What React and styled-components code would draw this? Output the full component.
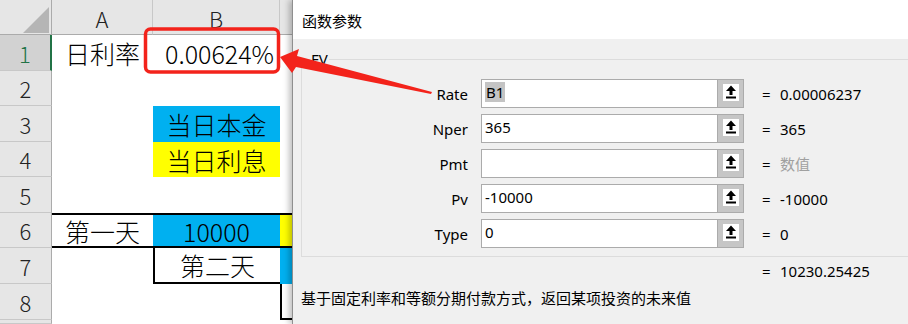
import React from "react";
import styled, { createGlobalStyle, css } from "styled-components";

const GlobalStyle = createGlobalStyle`
  html, body {
    margin: 0;
    padding: 0;
    background: #fff;
  }
  * {
    box-sizing: border-box;
  }
`;

const SHEET_FONT = `"Noto Sans CJK SC", "Noto Sans", sans-serif`;
const UI_FONT = `"Noto Sans", "Noto Sans CJK SC", sans-serif`;

// row 9 only peeks in at the bottom edge, so its number isn't drawn
const rows = [
  { n: 1, cells: [{ text: "日利率" }, { text: "0.00624%", align: "right" }, {}] },
  { n: 2, cells: [{}, {}, {}] },
  { n: 3, cells: [{}, { text: "当日本金", fill: "#00b0f0" }, {}] },
  { n: 4, cells: [{}, { text: "当日利息", fill: "#ffff00" }, {}] },
  { n: 5, cells: [{}, {}, {}] },
  {
    n: 6,
    cells: [
      { text: "第一天", top: true, bottom: true },
      { text: "10000", fill: "#00b0f0", top: true, bottom: true },
      { fill: "#ffff00", top: true, bottom: true },
    ],
  },
  { n: 7, cells: [{}, { text: "第二天", left: true, bottom: true }, { fill: "#00b0f0" }] },
  { n: 8, cells: [{}, {}, { left: true, bottom: true }] },
  { n: 9, hideNumber: true, cells: [{}, {}, {}] },
];

const args = [
  { label: "Rate", value: "B1", selected: true, result: "0.00006237" },
  { label: "Nper", value: "365", result: "365" },
  { label: "Pmt", value: "", result: "数值", muted: true },
  { label: "Pv", value: "-10000", result: "-10000" },
  { label: "Type", value: "0", result: "0" },
];

const RefIcon = () => (
  <svg width="16" height="16" viewBox="0 0 16 16">
    <polygon points="8,1.5 3,7 6.5,7 6.5,11 9.5,11 9.5,7 13,7" fill="#000" />
    <rect x="3" y="12.5" width="10" height="2" fill="#000" />
  </svg>
);

const App = () => {
  return (
    <Wrapper>
      <GlobalStyle />
      <Sheet>
        <Corner>
          <CornerMark />
        </Corner>
        <ColHead>A</ColHead>
        <ColHead>B</ColHead>
        <ColHead $last />
        {rows.map((row) => (
          <React.Fragment key={row.n}>
            <RowHead $active={row.n === 1}>{row.hideNumber ? null : row.n}</RowHead>
            {row.cells.map((c, i) => (
              <Cell
                key={i}
                $fill={c.fill}
                $align={c.align}
                $top={c.top}
                $bottom={c.bottom}
                $left={c.left}
              >
                {c.text}
              </Cell>
            ))}
          </React.Fragment>
        ))}
      </Sheet>

      <Dialog>
        <TitleBar>函数参数</TitleBar>
        <Body>
          <Group>
            <Legend>FV</Legend>
            {args.map((a) => (
              <ArgRow key={a.label}>
                <ArgLabel>{a.label}</ArgLabel>
                <InputBox>
                  <InputText>
                    {a.selected ? <Selection>{a.value}</Selection> : a.value}
                  </InputText>
                  <RefButton>
                    <RefFace>
                      <RefIcon />
                    </RefFace>
                  </RefButton>
                </InputBox>
                <Eq>=</Eq>
                <ArgValue $muted={a.muted}>{a.result}</ArgValue>
              </ArgRow>
            ))}
          </Group>
          <ResultRow>
            <Eq $flush>=</Eq>
            <ArgValue>10230.25425</ArgValue>
          </ResultRow>
          <Description>基于固定利率和等额分期付款方式，返回某项投资的未来值</Description>
        </Body>
      </Dialog>

      <Callout width="908" height="324" viewBox="0 0 908 324">
        <rect
          x="145.5"
          y="29"
          width="133"
          height="43"
          rx="5"
          fill="none"
          stroke="#f3231b"
          strokeWidth="3.5"
        />
        <polygon
          points="280,57 299,49 297,56 432,92 431,94 296,67 292,73"
          fill="#f3231b"
        />
      </Callout>
    </Wrapper>
  );
};

export default App;

const Wrapper = styled.div`
  position: relative;
  display: flex;
  width: 908px;
  height: 324px;
  overflow: hidden;
  background: #fff;
`;

const Sheet = styled.div`
  display: grid;
  grid-template-columns: 52px 101px 127px 12px;
  grid-template-rows: 35px 36px 35px 36px 35px 36px 35px 36px 36px 4px;
  width: 292px;
  flex-shrink: 0;
  font-family: ${SHEET_FONT};
  font-weight: 300;
  color: #000;
`;

const Corner = styled.div`
  background: #e6e6e6;
  border-right: 1px solid #ababab;
  border-bottom: 1px solid #ababab;
  position: relative;
`;

const CornerMark = styled.div`
  position: absolute;
  left: 23px;
  top: 7px;
  width: 26px;
  height: 26px;
  background: #b5b5b5;
  clip-path: polygon(100% 0, 100% 100%, 0 100%);
`;

const ColHead = styled.div`
  background: #e6e6e6;
  border-right: ${(p) => (p.$last ? "none" : "1px solid #c8c8c8")};
  border-bottom: 1px solid #ababab;
  display: flex;
  align-items: center;
  justify-content: center;
  font-size: 22px;
  color: #222;
  padding-top: 2px;
`;

const RowHead = styled.div`
  background: ${(p) => (p.$active ? "#d2d2d2" : "#e6e6e6")};
  color: ${(p) => (p.$active ? "#217346" : "#222")};
  border-bottom: 1px solid #c8c8c8;
  border-right: ${(p) => (p.$active ? "2px solid #217346" : "1px solid #ababab")};
  display: flex;
  align-items: center;
  justify-content: center;
  font-size: 22px;
  overflow: hidden;
  min-height: 0;
`;

const Cell = styled.div`
  display: flex;
  align-items: center;
  justify-content: ${(p) => (p.$align === "right" ? "flex-end" : "center")};
  padding: ${(p) => (p.$align === "right" ? "0 6px 0 0" : "0")};
  background: ${(p) => p.$fill || "#fff"};
  font-size: 25px;
  white-space: nowrap;
  overflow: hidden;
  min-height: 0;
  ${(p) =>
    p.$top &&
    css`
      border-top: 2px solid #000;
    `}
  ${(p) =>
    p.$bottom &&
    css`
      border-bottom: 2px solid #000;
    `}
  ${(p) =>
    p.$left &&
    css`
      border-left: 2px solid #000;
    `}
`;

const Dialog = styled.div`
  position: relative;
  z-index: 1;
  flex: 1;
  display: flex;
  flex-direction: column;
  background: #f0f0f0;
  border-left: 1px solid #8f8f8f;
  box-shadow: -3px 0 6px rgba(0, 0, 0, 0.25);
  font-family: ${UI_FONT};
  color: #000;
`;

const TitleBar = styled.div`
  height: 39px;
  background: #fff;
  padding: 2px 0 0 9px;
  display: flex;
  align-items: center;
  font-family: ${SHEET_FONT};
  font-size: 15px;
`;

const Body = styled.div`
  flex: 1;
  padding-left: 8px;
  display: flex;
  flex-direction: column;
`;

const Group = styled.fieldset`
  margin: 10px 0 0 0;
  padding: 10px 0 8px 0;
  border: 1px solid #dcdcdc;
  border-right: none;
  min-width: 0;
`;

const Legend = styled.legend`
  margin-left: 8px;
  padding: 0 1px;
  font-size: 15px;
  line-height: 20px;
`;

const ArgRow = styled.div`
  display: flex;
  align-items: center;
  height: 29px;
  margin-bottom: 6px;
  &:last-child {
    margin-bottom: 0;
  }
`;

const ArgLabel = styled.div`
  width: 166px;
  text-align: right;
  font-size: 15px;
  line-height: 20px;
`;

const InputBox = styled.div`
  display: flex;
  width: 263px;
  height: 29px;
  margin-left: 13px;
  background: #fff;
  border: 1px solid #ababab;
`;

const InputText = styled.div`
  flex: 1;
  padding: 2px 0 0 3px;
  font-size: 15px;
  line-height: 20px;
`;

const Selection = styled.span`
  background: #c4c4c4;
  padding: 0 1px;
`;

const RefButton = styled.div`
  width: 26px;
  display: flex;
  align-items: center;
  justify-content: center;
  background: #c6c6c6;
  border-left: 1px solid #ababab;
  padding-bottom: 3px;
`;

const RefFace = styled.div`
  width: 16px;
  height: 17px;
  background: #fff;
  display: flex;
  align-items: center;
  justify-content: center;
`;

const Eq = styled.div`
  width: 18px;
  margin-left: ${(p) => (p.$flush ? "0" : "18px")};
  font-size: 15px;
  line-height: 20px;
`;

const ArgValue = styled.div`
  font-size: 15px;
  line-height: 20px;
  color: ${(p) => (p.$muted ? "#a0a0a0" : "#000")};
  font-family: ${(p) => (p.$muted ? SHEET_FONT : UI_FONT)};
`;

const ResultRow = styled.div`
  display: flex;
  align-items: center;
  margin-top: 4px;
  padding-left: 461px;
`;

const Description = styled.div`
  margin-top: 7px;
  font-family: ${SHEET_FONT};
  font-size: 15px;
  line-height: 20px;
`;

const Callout = styled.svg`
  position: absolute;
  left: 0;
  top: 0;
  z-index: 2;
  pointer-events: none;
`;
